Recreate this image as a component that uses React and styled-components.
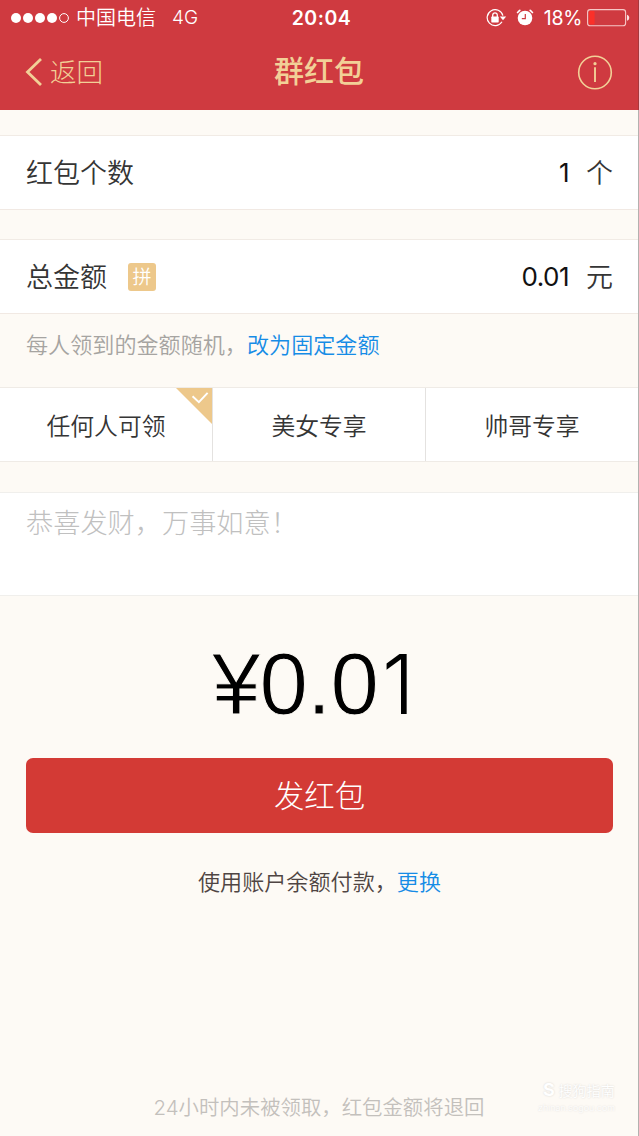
import React from 'react';
import styled, { createGlobalStyle } from "styled-components";

const GlobalStyle = createGlobalStyle`
  * {
    box-sizing: border-box;
  }

  body {
    margin: 0;
    background: #fdfaf5;
    font-family: Inter, "Noto Sans CJK SC", sans-serif;
    font-weight: 350;
    color: #353535;
  }
`;

function StatusBar() {
    return (
        <StatusBarStyled>
            <StatusLeft>
                <svg width="58" height="12" viewBox="0 0 58 12" fill="#fff">
                    <circle cx="5" cy="6" r="5" />
                    <circle cx="17" cy="6" r="5" />
                    <circle cx="29" cy="6" r="5" />
                    <circle cx="41" cy="6" r="5" />
                    <circle cx="53" cy="6" r="4.4" fill="none" stroke="#fff" />
                </svg>
                <Carrier>中国电信</Carrier>
                <Network>4G</Network>
            </StatusLeft>
            <Clock>20:04</Clock>
            <StatusRight>
                <LockIcon />
                <AlarmIcon />
                <Percent>18%</Percent>
                <BatteryIcon />
            </StatusRight>
        </StatusBarStyled>
    );
}

function LockIcon() {
    return (
        <svg width="21" height="18" viewBox="0 0 21 18" fill="none" stroke="#fff">
            <path d="M16 12.8A8 8 0 1 1 16.9 6.6" strokeWidth="1.2" />
            <path d="M13.8 7.4h6.4l-3.2 3.8z" fill="#fff" stroke="none" />
            <path d="M6.7 8.3V6.2a2.3 2.3 0 0 1 4.6 0v2.1" strokeWidth="1.3" />
            <rect x="5.3" y="7.6" width="7.4" height="5.8" rx="0.6" fill="#fff" stroke="none" />
        </svg>
    );
}

function AlarmIcon() {
    return (
        <svg width="18" height="18" viewBox="0 0 18 18" fill="none" stroke="#fff">
            <circle cx="9" cy="9" r="7.3" fill="#fff" stroke="none" />
            <path d="M1.2 4.2A8 8 0 0 1 4.4 1M16.8 4.2A8 8 0 0 0 13.6 1" strokeWidth="1.5" />
            <path d="M9.3 5v4.6H5.8" stroke="#cf3a40" strokeWidth="1.2" />
        </svg>
    );
}

function BatteryIcon() {
    return (
        <svg width="43" height="18" viewBox="0 0 43 18">
            <rect x="0.6" y="0.6" width="38" height="16.2" rx="2.6" fill="none" stroke="#f6c8c6" strokeWidth="1.1" />
            <rect x="2" y="2" width="5.6" height="13.4" rx="1" fill="#fb3029" />
            <path d="M40 5.8c1.5.4 2.2 1.6 2.2 3s-.7 2.6-2.2 3z" fill="#fbe2e0" />
        </svg>
    );
}

function NavBar() {
    return (
        <NavBarStyled>
            <BackButton>
                <svg width="18" height="30" viewBox="0 0 18 30" fill="none" stroke="#f2d097" strokeWidth="2.8">
                    <path d="M16 2L2.5 15 16 28" />
                </svg>
                <span>返回</span>
            </BackButton>
            <NavTitle>群红包</NavTitle>
            <InfoButton>
                <svg width="36" height="36" viewBox="0 0 36 36" fill="none" stroke="#f2d097">
                    <circle cx="18" cy="17.5" r="16.3" strokeWidth="1.6" />
                    <path d="M18 12.3v14.8" strokeWidth="1.9" />
                    <circle cx="18" cy="8.7" r="1.6" fill="#f2d097" stroke="none" />
                </svg>
            </InfoButton>
        </NavBarStyled>
    );
}

function Field({ label, badge, value, unit, gap }) {
    return (
        <FieldRow $gap={gap}>
            <FieldText>{label}</FieldText>
            {badge && <Badge>{badge}</Badge>}
            <FieldValue>{value}</FieldValue>
            <FieldText>{unit}</FieldText>
        </FieldRow>
    );
}

function App() {
    const audiences = ["任何人可领", "美女专享", "帅哥专享"];

    return (
        <Page>
            <GlobalStyle />
            <Header>
                <StatusBar />
                <NavBar />
            </Header>
            <Content>
                <Field label="红包个数" value="1" unit="个" gap={25} />
                <Field label="总金额" badge="拼" value="0.01" unit="元" gap={29} />
                <Hint>
                    每人领到的金额随机，<Link>改为固定金额</Link>
                </Hint>
                <Tabs>
                    {audiences.map((name, index) => (
                        <Tab key={name}>
                            {name}
                            {index === 0 && (
                                <Corner width="36" height="36" viewBox="0 0 37 37">
                                    <path d="M0 0h37v37z" fill="#edc88b" />
                                    <path d="M17 8.5l6.5 6L32.5 5" fill="none" stroke="#fff" strokeWidth="2" />
                                </Corner>
                            )}
                        </Tab>
                    ))}
                </Tabs>
                <Message>恭喜发财，万事如意！</Message>
                <Amount>¥0.0<LastDigit>1</LastDigit></Amount>
                <SendButton>发红包</SendButton>
                <Payment>
                    使用账户余额付款，<Link>更换</Link>
                </Payment>
                <Footer>24小时内未被领取，红包金额将退回</Footer>
            </Content>
            <Watermark>
                <WatermarkName><b>S</b>搜狗指南</WatermarkName>
                <WatermarkSite>zhinan.sogou.com</WatermarkSite>
            </Watermark>
        </Page>
    );
}

const Page = styled.div`
  position: relative;
  display: flex;
  flex-direction: column;
  width: 639px;
  height: 1136px;
  overflow: hidden;
  background: #fdfaf5;
`;

const Header = styled.header`
  height: 110px;
  background: #cf3a40;
  border-right: 1px solid #a5383c;
`;

const StatusBarStyled = styled.div`
  display: grid;
  grid-template-columns: 1fr auto 1fr;
  align-items: center;
  height: 35px;
  padding: 0 8px 0 11px;
  color: #fff;
`;

const StatusLeft = styled.div`
  display: flex;
  align-items: center;
  font-size: 19px;
`;

const Carrier = styled.span`
  margin-left: 7px;
  padding-top: 1px;
  font-size: 20px;
  line-height: 28px;
`;

const Network = styled.span`
  margin-left: 16px;
`;

const Clock = styled.div`
  padding-left: 2px;
  font-size: 19.5px;
  font-weight: 600;
  letter-spacing: 0.5px;
`;

const StatusRight = styled.div`
  display: flex;
  align-items: center;
  justify-content: flex-end;

  svg + svg {
    margin-left: 9px;
  }
`;

const Percent = styled.span`
  margin: 0 5px 0 10px;
  font-size: 19.5px;
  font-weight: 400;
  letter-spacing: -0.3px;
`;

const NavBarStyled = styled.div`
  display: grid;
  grid-template-columns: 1fr auto 1fr;
  align-items: center;
  height: 75px;
  padding: 0 25px;
  color: #f2d097;
`;

const BackButton = styled.div`
  display: flex;
  align-items: center;
  gap: 7px;
  padding-bottom: 2px;
  font-size: 26.5px;
  font-weight: 300;

  span {
    padding-bottom: 2px;
  }
`;

const NavTitle = styled.div`
  padding-bottom: 7px;
  font-size: 30px;
  font-weight: 500;
`;

const InfoButton = styled.div`
  display: flex;
  justify-content: flex-end;
`;

const Content = styled.main`
  flex: 1;
  display: flex;
  flex-direction: column;
  border-right: 1px solid #b3b1af;
`;

const FieldRow = styled.div`
  display: flex;
  align-items: center;
  height: 75px;
  margin-top: ${({ $gap }) => $gap}px;
  padding: 0 25px 0 26px;
  background: #fff;
  border-top: 1px solid #f1ebe5;
  border-bottom: 1px solid #f1e9e3;
  font-size: 27px;
`;

const FieldText = styled.span`
  padding-bottom: 2px;
`;

const Badge = styled.span`
  width: 28px;
  height: 28px;
  margin-left: 21px;
  border-radius: 3px;
  background: #edc88b;
  color: #fff;
  font-size: 19px;
  line-height: 30px;
  text-align: center;
`;

const FieldValue = styled.span`
  margin: 0 17px 0 auto;
  color: #111;
  font-size: 26px;
  font-weight: 400;
  letter-spacing: -0.5px;
`;

const Hint = styled.div`
  height: 73px;
  padding: 15px 26px 0;
  color: #a6a4a1;
  font-size: 22.1px;
  line-height: 33px;
`;

const Link = styled.span`
  color: #168ce6;
`;

const Tabs = styled.div`
  display: flex;
  height: 75px;
  border-top: 1px solid #efebe6;
  border-bottom: 1px solid #efebe6;
  background: #fff;
`;

const Tab = styled.div`
  position: relative;
  flex: 1;
  display: flex;
  align-items: center;
  justify-content: center;
  padding-bottom: 1px;
  font-size: 23.8px;

  & + & {
    border-left: 1px solid #e4e2e0;
  }
`;

const Corner = styled.svg`
  position: absolute;
  top: 0;
  right: 0;
`;

const Message = styled.div`
  height: 104px;
  margin-top: 30px;
  padding: 11px 26px;
  background: #fff;
  border-top: 1px solid #f0efec;
  border-bottom: 1px solid #f0efec;
  color: #c0c0c0;
  font-size: 27.2px;
  font-weight: 300;
  line-height: 40px;
`;

/* the outline in the page colour thins the digits down */
const Amount = styled.div`
  height: 162px;
  padding-top: 38px;
  color: #000;
  font-family: "Liberation Sans", sans-serif;
  font-size: 87px;
  letter-spacing: -0.8px;
  line-height: 100px;
  text-align: center;
  -webkit-text-stroke: 1px #fdfaf5;
`;

const LastDigit = styled.span`
  display: inline-block;
  width: 48px;
  padding-left: 4px;
  font-family: Inter, sans-serif;
  font-size: 83px;
  font-weight: 300;
  text-align: left;
  -webkit-text-stroke: 0;
`;

const SendButton = styled.div`
  height: 75px;
  margin: 0 25px 0 26px;
  border-radius: 7px;
  background: #d33a35;
  color: #fff;
  font-size: 30.4px;
  font-weight: 300;
  line-height: 76px;
  text-align: center;
`;

const Payment = styled.div`
  margin-top: 33px;
  padding-left: 1px;
  color: #4f4543;
  font-size: 22.1px;
  line-height: 33px;
  text-align: center;
`;

const Footer = styled.div`
  margin-top: auto;
  margin-bottom: 12px;
  color: #c3c0bc;
  font-size: 20.4px;
  line-height: 32px;
  text-align: center;
`;

const Watermark = styled.div`
  position: absolute;
  left: 538px;
  top: 1080px;
  color: #fff;
  text-shadow: 0 0 2px #d6d3d0;
`;

const WatermarkName = styled.div`
  font-size: 14px;
  line-height: 20px;
  white-space: nowrap;

  b {
    margin: 0 4px 0 5px;
    font-size: 18px;
  }
`;

const WatermarkSite = styled.div`
  font-size: 9px;
  line-height: 13px;
`;

export default App;
